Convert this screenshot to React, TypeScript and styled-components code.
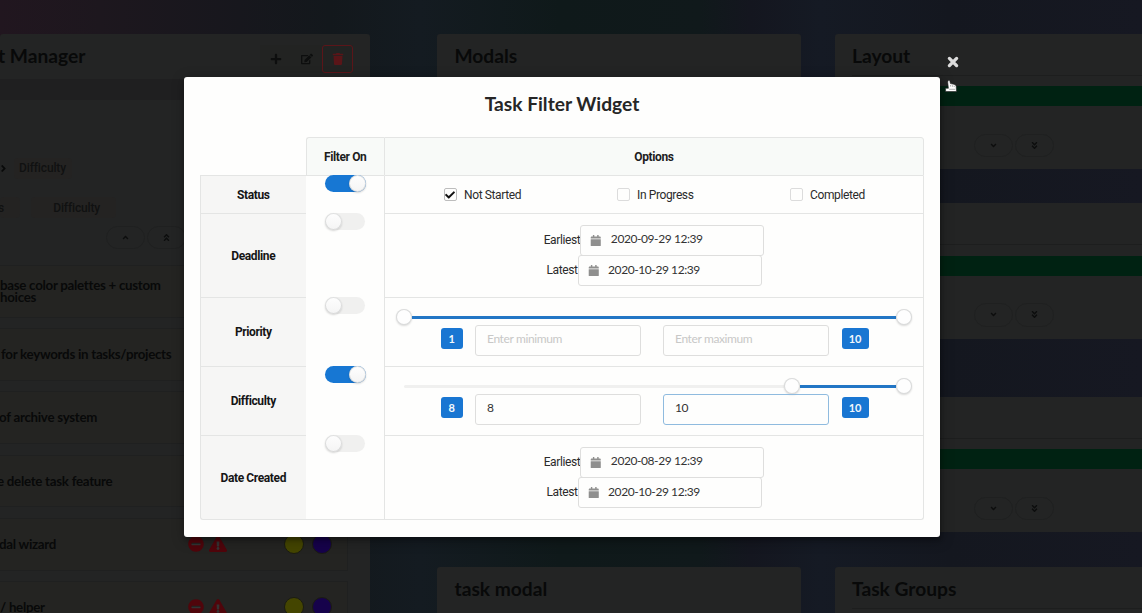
import React from "react";
import styled, { createGlobalStyle, css } from "styled-components";
import {
  FaAngleDoubleDown,
  FaAngleDoubleUp,
  FaAngleDown,
  FaAngleRight,
  FaAngleUp,
  FaCalendar,
  FaCheck,
  FaEdit,
  FaExclamationTriangle,
  FaMinusCircle,
  FaPlus,
  FaTrash,
} from "react-icons/fa";

const GlobalStyle = createGlobalStyle`
  * { box-sizing: border-box; }
  body { margin: 0; overflow: hidden; background: #14181d; }
`;

const lato = css`font-family: Lato, "Liberation Sans", sans-serif;`;
const roboto = css`font-family: Roboto, "Liberation Sans", sans-serif;`;

/* ---------- dimmed board ---------- */

const Page = styled.div`
  position: relative;
  width: 1142px;
  height: 613px;
  overflow: hidden;
  ${lato}
  color: #080909;
`;

const Board = styled.div`
  display: flex;
  align-items: flex-start;
  height: 613px;
  padding-top: 33.5px;
  background: linear-gradient(90deg, #21161f 0, #1d171e 100px, #17171d 240px, #13181c 330px, #141b21 420px, #0f191a 560px, #10191b 700px, #14161f 750px, #151a24 820px, #14171f 950px, #161822 1142px);
`;

const Column = styled.div<{ $width: number; $gap: number }>`
  flex: none;
  display: flex;
  flex-direction: column;
  width: ${(p) => p.$width}px;
  margin-right: ${(p) => p.$gap}px;
`;

const Panel = styled.section<{ $height: number; $after?: number }>`
  flex: none;
  height: ${(p) => p.$height}px;
  margin-bottom: ${(p) => p.$after ?? 0}px;
  border-radius: 3px;
  background: #232424;
  overflow: hidden;
`;

const PanelHead = styled.header<{ $left: number; $height?: number }>`
  display: flex;
  align-items: center;
  justify-content: space-between;
  height: ${(p) => p.$height ?? 45}px;
  padding-left: ${(p) => p.$left}px;
  padding-right: 17px;
`;

const PanelTitle = styled.h2<{ $drop?: number; $shift?: number }>`
  margin: 0 0 0 ${(p) => p.$shift ?? 0}px;
  padding-top: ${(p) => p.$drop ?? 0}px;
  padding-bottom: ${(p) => (p.$drop ? 0 : 2)}px;
  font-size: 19.2px;
  line-height: 23px;
  font-weight: 700;
  white-space: nowrap;
`;

const HeadActions = styled.div`
  display: flex;
  margin-top: 6px;
  background: #222322;
`;

const HeadButton = styled.span<{ $danger?: boolean }>`
  display: flex;
  align-items: center;
  justify-content: center;
  width: 31px;
  height: 28px;
  border: 1.5px solid ${(p) => (p.$danger ? "#5b1519" : "transparent")};
  border-radius: 3px;
  color: ${(p) => (p.$danger ? "#591518" : "#0d0e0e")};
  font-size: 12px;
`;

const Strip = styled.div`
  height: 21px;
  background: #1f1f20;
`;

const PillRow = styled.div<{ $top: number; $left: number; $gap: number }>`
  display: flex;
  align-items: center;
  gap: ${(p) => p.$gap}px;
  margin-top: ${(p) => p.$top}px;
  margin-left: ${(p) => p.$left}px;
  font-size: 11px;
  height: 22px;
`;

const Pill = styled.span<{ $width: number; $center?: boolean }>`
  flex: none;
  display: flex;
  align-items: center;
  justify-content: ${(p) => (p.$center ? "center" : "flex-end")};
  width: ${(p) => p.$width}px;
  height: 21px;
  padding-right: ${(p) => (p.$center ? 0 : 16)}px;
  border-radius: 4px;
  background: #242322;
  color: #101111;
  ${roboto}
  font-size: 12px;
  letter-spacing: -0.15px;
  font-weight: 500;
`;

const RoundRow = styled.div<{ $top: number; $left: number }>`
  display: flex;
  gap: 2px;
  margin-top: ${(p) => p.$top}px;
  margin-left: ${(p) => p.$left}px;
`;

const RoundButton = styled.span`
  flex: none;
  display: flex;
  align-items: center;
  justify-content: center;
  width: 39px;
  height: 23.5px;
  border: 1px solid #1f2020;
  border-radius: 12px;
  font-size: 9px;
  color: #0c0d0d;
`;

const TaskList = styled.div`
  display: flex;
  flex-direction: column;
  gap: 10.4px;
  margin-top: 16px;
`;

const TaskCard = styled.div`
  display: flex;
  align-items: center;
  justify-content: space-between;
  width: 348px;
  height: 52.8px;
  padding-right: 15px;
  border: 1px solid #1f2020;
  border-left: 0;
  background: #242422;
`;

const TaskName = styled.span<{ $shift: number }>`
  margin-left: ${(p) => p.$shift}px;
  font-size: 13.3px;
  line-height: 12.6px;
  letter-spacing: -0.27px;
  font-weight: 700;
  white-space: pre;
`;

const Flags = styled.span`
  display: flex;
  align-items: center;
  color: #50050b;
`;

const FlagIcon = styled.span<{ $size: number; $gap: number; $mark: string }>`
  display: flex;
  margin-right: ${(p) => p.$gap}px;
  font-size: ${(p) => p.$size}px;
  background: linear-gradient(#343434, #343434) center 62% / ${(p) => p.$mark} no-repeat;
`;

const Dot = styled.span<{ $color: string; $gap: number }>`
  width: 20px;
  height: 20px;
  margin-right: ${(p) => p.$gap}px;
  border: 1px solid #1b1c12;
  border-radius: 50%;
  background: ${(p) => p.$color};
`;

const Divider = styled.div`
  height: 1px;
  margin: 0 17px;
  background: #1d1e1e;
`;

const GreenBar = styled.div`
  height: 20px;
  margin-top: 10.5px;
  background: #002212;
`;

/* ---------- modal ---------- */

const CloseButton = styled.svg`
  position: absolute;
  left: 947px;
  top: 56px;
`;

const Pointer = styled.svg`
  position: absolute;
  left: 945px;
  top: 80px;
`;

const Modal = styled.div`
  position: absolute;
  left: 184px;
  top: 77px;
  width: 756px;
  height: 459.5px;
  padding: 13px 16px 0;
  border-radius: 3px;
  background: #fefefd;
  box-shadow: 1px 3px 3px rgba(0, 0, 0, 0.2), 1px 3px 12px 2px rgba(0, 0, 0, 0.25);
`;

const ModalTitle = styled.h1`
  margin: 0 0 20px;
  font-size: 19.2px;
  line-height: 27px;
  font-weight: 700;
  text-align: center;
  color: #262626;
`;

const Grid = styled.div`
  display: grid;
  grid-template-columns: 105.5px 78.5px 540px;
  grid-template-rows: 39px 38px 84px 69px 69px 84px;
  width: 724px;
  ${roboto}
  font-size: 12px;
  letter-spacing: -0.38px;
  color: #2b2b2b;
`;

const line = "1px solid #e4e5e4";

const HeadCell = styled.div<{ $first?: boolean }>`
  display: flex;
  align-items: center;
  justify-content: center;
  border-top: ${line};
  border-bottom: ${line};
  border-right: ${(p) => (p.$first ? "0" : line)};
  border-left: ${line};
  border-radius: ${(p) => (p.$first ? "3px 0 0 0" : "0 3px 0 0")};
  background: #f8faf8;
  font-weight: 700;
  color: #1d1d1d;
`;

const LabelCell = styled.div<{ $edge?: "top" | "bottom" }>`
  display: flex;
  align-items: center;
  justify-content: center;
  border-left: ${line};
  border-bottom: ${line};
  border-top: ${(p) => (p.$edge === "top" ? line : "0")};
  margin-top: ${(p) => (p.$edge === "top" ? -1 : 0)}px;
  border-radius: ${(p) => (p.$edge === "bottom" ? "0 0 0 3px" : "0")};
  background: #f6f6f5;
  font-weight: 700;
  color: #151515;
`;

const ToggleCell = styled.div<{ $last?: boolean }>`
  padding-left: 19.5px;
  border-bottom: ${(p) => (p.$last ? line : "0")};
`;

const Track = styled.div<{ $on: boolean }>`
  display: flex;
  justify-content: ${(p) => (p.$on ? "flex-end" : "flex-start")};
  width: ${(p) => (p.$on ? 40.5 : 39.5)}px;
  height: 17px;
  margin-top: -0.6px;
  border-radius: 9px;
  background: ${(p) => (p.$on ? "#1777d3" : "#f0f0ef")};
`;

const Knob = styled.span`
  width: 17px;
  height: 17px;
  border-radius: 50%;
  background: linear-gradient(#fefefe, #f4f4f4);
  box-shadow: 0 1px 2px rgba(0, 0, 0, 0.16), 0 0 0 1px rgba(34, 36, 38, 0.13) inset;
`;

const OptionsCell = styled.div<{ $last?: boolean }>`
  display: flex;
  flex-direction: column;
  justify-content: center;
  border-left: ${line};
  border-right: ${line};
  border-bottom: ${line};
  border-radius: ${(p) => (p.$last ? "0 0 3px 0" : "0")};
`;

const Checks = styled.div`
  display: grid;
  grid-template-columns: repeat(3, 173px);
  padding-left: 58.5px;
`;

const Check = styled.label`
  display: flex;
  align-items: center;
  gap: 7px;
`;

const Box = styled.span<{ $on: boolean }>`
  display: flex;
  align-items: center;
  justify-content: center;
  width: 13.5px;
  height: 13.5px;
  border: 1px solid ${(p) => (p.$on ? "#bdbdbd" : "#dcdcdc")};
  border-radius: 2px;
  font-size: 10px;
  color: #111;
`;

const DateLine = styled.div`
  display: flex;
  align-items: center;
  justify-content: center;
  height: 30.3px;
`;

const DateLabel = styled.span`
  margin-top: -1px;
`;

const DateInput = styled.span`
  display: flex;
  align-items: center;
  gap: 9px;
  width: 184px;
  height: 30.5px;
  padding-left: 9px;
  border: 1px solid #dededd;
  border-radius: 3px;
  color: #8f8f8e;
`;

const DateText = styled.span`
  margin-top: -3px;
  ${lato}
  font-size: 12px;
  letter-spacing: -0.42px;
  color: #333;
`;

const Rail = styled.div`
  display: flex;
  align-items: center;
  height: 17px;
  margin: 0 11px 0 10.5px;
`;

const RailEmpty = styled.span<{ $width: number }>`
  width: ${(p) => p.$width}px;
  height: 3px;
  margin-left: ${(p) => (p.$width ? 8 : 0)}px;
  border-radius: 2px 0 0 2px;
  background: #f0f0ef;
`;

const RailFill = styled.span`
  flex: 1;
  height: 3px;
  background: #2276c5;
`;

const Handle = styled.span`
  flex: none;
  width: 16px;
  height: 16px;
  border-radius: 50%;
  background: #fefefe;
  box-shadow: 0 1px 2px rgba(0, 0, 0, 0.14), 0 0 0 1px rgba(34, 36, 38, 0.16) inset;
`;

const RangeRow = styled.div`
  display: flex;
  align-items: center;
  height: 30.5px;
  margin-top: -0.5px;
  padding-left: 56px;
`;

const Badge = styled.span<{ $width: number }>`
  display: flex;
  align-items: center;
  justify-content: center;
  width: ${(p) => p.$width}px;
  height: 21px;
  margin-right: 12px;
  margin-top: -3px;
  border-radius: 3px;
  background: #1976d2;
  color: #f4f8fc;
  ${lato}
  font-size: 11px;
  font-weight: 700;
  letter-spacing: -0.1px;
`;

const NumberInput = styled.span<{ $gap: number; $focus?: boolean; $empty?: boolean }>`
  display: flex;
  align-items: center;
  width: 166px;
  height: 30.5px;
  margin-right: ${(p) => p.$gap}px;
  padding: 0 0 3px 11.5px;
  border: 1px solid ${(p) => (p.$focus ? "#8fbbdf" : "#dededd")};
  border-radius: 3px;
  ${lato}
  font-size: 12px;
  color: ${(p) => (p.$empty ? "#c8c8c7" : "#333")};
`;

const tasks = [
  { name: "base color palettes + custom\nhoices", left: 0, flags: false },
  { name: "for keywords in tasks/projects", left: 1, flags: false },
  { name: "of archive system", left: -1, flags: false },
  { name: "e delete task feature", left: -3, flags: false },
  { name: "dal wizard", left: -1, flags: true },
  { name: "/ helper", left: 0, flags: true },
];

function Toggle({ on, last }: { on: boolean; last?: boolean }) {
  return (
    <ToggleCell $last={last}>
      <Track $on={on}>
        <Knob />
      </Track>
    </ToggleCell>
  );
}

function Dates({ earliest, latest, last }: { earliest: string; latest: string; last?: boolean }) {
  return (
    <OptionsCell $last={last}>
      {[["Earliest", earliest], ["Latest", latest]].map(([label, value]) => (
        <DateLine key={label}>
          <DateLabel>{label}</DateLabel>
          <DateInput>
            <FaCalendar size={11.5} />
            <DateText>{value}</DateText>
          </DateInput>
        </DateLine>
      ))}
    </OptionsCell>
  );
}

function Range({ low, high, from, to, empty }: { low: string; high: string; from: string; to: string; empty: boolean }) {
  return (
    <OptionsCell>
      <Rail>
        <RailEmpty $width={empty ? 0 : 380.5} />
        <Handle />
        <RailFill />
        <Handle />
      </Rail>
      <RangeRow>
        <Badge $width={21.5}>{low}</Badge>
        <NumberInput $gap={22} $empty={empty}>{from}</NumberInput>
        <NumberInput $gap={13} $empty={empty} $focus={!empty}>{to}</NumberInput>
        <Badge $width={27}>{high}</Badge>
      </RangeRow>
    </OptionsCell>
  );
}

function TaskPanel({ title, after }: { title?: string; after: number }) {
  return (
    <Panel $height={135.5} $after={after}>
      <PanelHead $left={17} $height={41}>{title && <PanelTitle $drop={2.4}>{title}</PanelTitle>}</PanelHead>
      <Divider />
      <GreenBar />
      <RoundRow $top={27.5} $left={139}>
        <RoundButton><FaAngleDown /></RoundButton>
        <RoundButton><FaAngleDoubleDown /></RoundButton>
      </RoundRow>
    </Panel>
  );
}

export default function App() {
  return (
    <Page>
      <GlobalStyle />
      <Board>
        <Column $width={370} $gap={67}>
          <Panel $height={600}>
            <PanelHead $left={0}>
              <PanelTitle $shift={-2}>t Manager</PanelTitle>
              <HeadActions>
                <HeadButton><FaPlus /></HeadButton>
                <HeadButton><FaEdit /></HeadButton>
                <HeadButton $danger><FaTrash /></HeadButton>
              </HeadActions>
            </PanelHead>
            <Strip />
            <PillRow $top={57.5} $left={-2} $gap={4.5}>
              <FaAngleRight />
              <Pill $width={58} $center>Difficulty</Pill>
            </PillRow>
            <PillRow $top={17.5} $left={0} $gap={11}>
              <Pill $width={20}>s</Pill>
              <Pill $width={85}>Difficulty</Pill>
            </PillRow>
            <RoundRow $top={7} $left={106}>
              <RoundButton><FaAngleUp /></RoundButton>
              <RoundButton><FaAngleDoubleUp /></RoundButton>
            </RoundRow>
            <TaskList>
              {tasks.map((task) => (
                <TaskCard key={task.name}>
                  <TaskName $shift={task.left}>{task.name}</TaskName>
                  {task.flags && (
                    <Flags>
                      <FlagIcon $size={16} $gap={5} $mark="10px 4px"><FaMinusCircle /></FlagIcon>
                      <FlagIcon $size={18} $gap={57} $mark="4px 11px"><FaExclamationTriangle /></FlagIcon>
                      <Dot $color="#444500" $gap={8} />
                      <Dot $color="#16024b" $gap={0} />
                    </Flags>
                  )}
                </TaskCard>
              ))}
            </TaskList>
          </Panel>
        </Column>
        <Column $width={364} $gap={34}>
          <Panel $height={320} $after={213}>
            <PanelHead $left={17.5}><PanelTitle>Modals</PanelTitle></PanelHead>
          </Panel>
          <Panel $height={100}>
            <PanelHead $left={17.5}><PanelTitle>task modal</PanelTitle></PanelHead>
          </Panel>
        </Column>
        <Column $width={364} $gap={0}>
          <TaskPanel title="Layout" after={34} />
          <TaskPanel after={58} />
          <TaskPanel after={34.5} />
          <TaskPanel title="Task Groups" after={0} />
        </Column>
      </Board>

      <CloseButton width="12" height="12" viewBox="0 0 12 12">
        <path d="M2.4 2.4 9.6 9.6M9.6 2.4 2.4 9.6" stroke="#dcdcdc" strokeWidth="3.3" strokeLinecap="round" />
      </CloseButton>
      <Modal>
        <ModalTitle>Task Filter Widget</ModalTitle>
        <Grid>
          <div />
          <HeadCell $first>Filter On</HeadCell>
          <HeadCell>Options</HeadCell>

          <LabelCell $edge="top">Status</LabelCell>
          <Toggle on />
          <OptionsCell>
            <Checks>
              <Check><Box $on><FaCheck /></Box>Not Started</Check>
              <Check><Box $on={false} />In Progress</Check>
              <Check><Box $on={false} />Completed</Check>
            </Checks>
          </OptionsCell>

          <LabelCell>Deadline</LabelCell>
          <Toggle on={false} />
          <Dates earliest="2020-09-29 12:39" latest="2020-10-29 12:39" />

          <LabelCell>Priority</LabelCell>
          <Toggle on={false} />
          <Range low="1" high="10" from="Enter minimum" to="Enter maximum" empty />

          <LabelCell>Difficulty</LabelCell>
          <Toggle on />
          <Range low="8" high="10" from="8" to="10" empty={false} />

          <LabelCell $edge="bottom">Date Created</LabelCell>
          <Toggle on={false} last />
          <Dates earliest="2020-08-29 12:39" latest="2020-10-29 12:39" last />
        </Grid>
      </Modal>
      <Pointer width="13" height="12" viewBox="0 0 13 12">
        <path d="M3.2 .4 Q4.6 0 4.9 1.2 L5.4 3.6 L9 4.3 Q11 4.6 11.2 6.2 L11.5 11.5 H.6 V8.3 H3.4 L2.7 2 Z" fill="#fff" stroke="#222" strokeWidth=".6" />
        <path d="M5.6 6.6V5M7.4 6.8V5.2M9.2 7V5.6M4.2 9.3h6" stroke="#777" strokeWidth=".6" />
      </Pointer>
    </Page>
  );
}
